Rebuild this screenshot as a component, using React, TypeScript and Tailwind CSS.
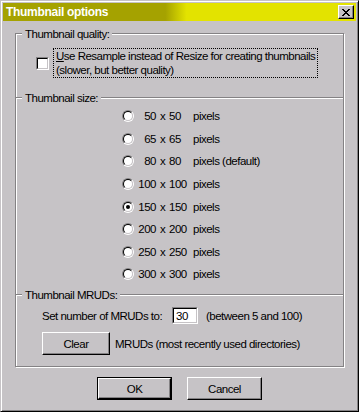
const sizes = [
  { a: "50", b: "50", note: "" },
  { a: "65", b: "65", note: "" },
  { a: "80", b: "80", note: " (default)" },
  { a: "100", b: "100", note: "" },
  { a: "150", b: "150", note: "", checked: true },
  { a: "200", b: "200", note: "" },
  { a: "250", b: "250", note: "" },
  { a: "300", b: "300", note: "" },
];

function GroupLabel({ text }: { text: string }) {
  return (
    <div className="-mt-[7px] ml-[6px] h-[14px] w-fit bg-[#c6c3c6] pl-[3px] pr-[3px] leading-[14px]">
      {text}
    </div>
  );
}

function Radio({ checked }: { checked?: boolean }) {
  return (
    <div className="h-[12px] w-[12px] shrink-0 rounded-full border border-b-white border-l-[#848284] border-r-white border-t-[#848284]">
      <div className="flex h-full w-full items-center justify-center rounded-full border border-b-[#c6c3c6] border-l-black border-r-[#c6c3c6] border-t-black bg-white">
        {checked && <div className="h-[4px] w-[4px] rounded-full bg-black" />}
      </div>
    </div>
  );
}

function Button({ label, isDefault }: { label: string; isDefault?: boolean }) {
  if (isDefault) {
    return (
      <div className="h-[23px] w-[75px] border border-black">
        <div className="flex h-full w-full items-center justify-center border border-b-black border-l-white border-r-black border-t-white shadow-[inset_-1px_-1px_0_#848284]">
          {label}
        </div>
      </div>
    );
  }
  return (
    <div className="flex h-[23px] w-[75px] items-center justify-center border border-b-black border-l-white border-r-black border-t-white shadow-[inset_-1px_-1px_0_#848284]">
      {label}
    </div>
  );
}

export default function App() {
  return (
    <div
      className="h-[412px] w-[359px] whitespace-nowrap border border-b-black border-l-[#c6c3c6] border-r-black border-t-[#c6c3c6] bg-[#c6c3c6] p-[2px] text-[11.5px] leading-[14px] tracking-[-0.5px] text-black shadow-[inset_1px_1px_0_#fff,inset_-1px_-1px_0_#848284]"
      style={{ fontFamily: '"Liberation Sans", Arial, sans-serif' }}
    >
      {/* Title bar */}
      <div className="flex h-[18px] items-center justify-between bg-[linear-gradient(90deg,#a5a200_0%,#a5a200_46%,#e3e300_52%,#e3e300_100%)] pl-[3px] pr-[2px]">
        <span className="text-[12px] font-bold leading-[14px] tracking-[-0.3px] text-white">
          Thumbnail options
        </span>
        <div className="flex h-[14px] w-[16px] items-center justify-center border border-b-black border-l-white border-r-black border-t-white bg-[#c6c3c6] shadow-[inset_-1px_-1px_0_#848284]">
          <svg width="8" height="7" viewBox="0 0 8 7" shapeRendering="crispEdges">
            <path d="M0 0h2v1h-2zM6 0h2v1h-2zM1 1h2v1h-2zM5 1h2v1h-2zM2 2h4v1h-4zM3 3h2v1h-2zM2 4h4v1h-4zM1 5h2v1h-2zM5 5h2v1h-2zM0 6h2v1h-2zM6 6h2v1h-2z" fill="#000" />
          </svg>
        </div>
      </div>

      {/* Frame */}
      <div className="mx-[12px] mt-[12px] border-b border-l border-r border-[#848284] shadow-[inset_1px_0_0_#fff,1px_1px_0_#fff]">
        {/* Thumbnail quality */}
        <div className="flex h-[64px] flex-col border-t border-[#848284] shadow-[inset_0_1px_0_#fff]">
          <GroupLabel text="Thumbnail quality:" />
          <div className="ml-[20px] mt-[7px] flex items-center gap-[4px]">
            <div className="h-[13px] w-[13px] shrink-0 border border-b-white border-l-[#848284] border-r-white border-t-[#848284]">
              <div className="h-full w-full border border-b-[#c6c3c6] border-l-black border-r-[#c6c3c6] border-t-black bg-white" />
            </div>
            <div className="h-[30px] w-[265px] border border-dotted border-black pl-[2px]">
              <div>
                <span className="underline">U</span>se Resample instead of Resize for creating thumbnails
              </div>
              <div>(slower, but better quality)</div>
            </div>
          </div>
        </div>

        {/* Thumbnail size */}
        <div className="flex h-[197px] flex-col border-t border-[#848284] shadow-[inset_0_1px_0_#fff]">
          <GroupLabel text="Thumbnail size:" />
          <div className="flex flex-col">
            {sizes.map((s, i) => (
              <div key={i} className="flex h-[22.6px] items-center pl-[106px]">
                <Radio checked={s.checked} />
                <span className="ml-[4px] w-[18px] text-right">{s.a}</span>
                <span className="w-[13px] text-center">x</span>
                <span className="w-[19px]">{s.b}</span>
                <span className="ml-[5px]">pixels{s.note}</span>
              </div>
            ))}
          </div>
        </div>

        {/* Thumbnail MRUDs */}
        <div className="flex h-[72px] flex-col border-t border-[#848284] shadow-[inset_0_1px_0_#fff]">
          <GroupLabel text="Thumbnail MRUDs:" />
          <div className="ml-[26px] mt-[5px] flex h-[17px] items-center">
            <span className="w-[130px]">Set number of MRUDs to:</span>
            <div className="h-[17px] w-[26px] border border-b-white border-l-[#848284] border-r-white border-t-[#848284]">
              <div className="flex h-full w-full items-center border border-b-[#c6c3c6] border-l-black border-r-[#c6c3c6] border-t-black bg-white pl-[2px]">
                30
              </div>
            </div>
            <span className="ml-[8px]">(between 5 and 100)</span>
          </div>
          <div className="ml-[26px] mt-[8px] flex items-center">
            <div className="flex h-[23px] w-[68px] items-center justify-center border border-b-black border-l-white border-r-black border-t-white shadow-[inset_-1px_-1px_0_#848284]">
              Clear
            </div>
            <span className="ml-[5px]">MRUDs (most recently used directories)</span>
          </div>
        </div>
      </div>

      {/* Buttons */}
      <div className="mt-[10px] flex justify-center gap-[15px]">
        <Button label="OK" isDefault />
        <Button label="Cancel" />
      </div>
    </div>
  );
}
